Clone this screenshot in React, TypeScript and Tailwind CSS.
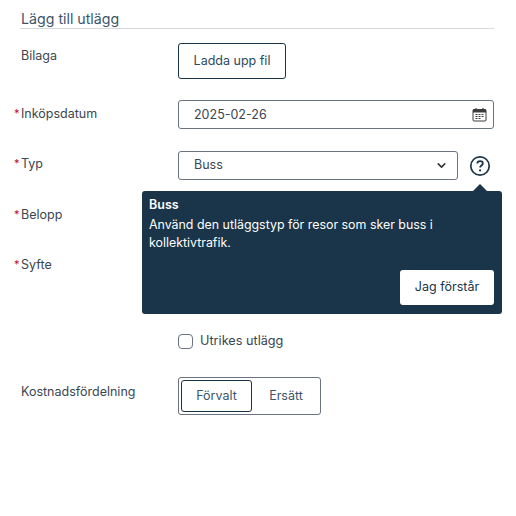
import { ChevronDown } from "lucide-react";

const font = "font-['Inter','Liberation_Sans',sans-serif]";

// Label column, required fields get a red star hanging to the left
function FieldLabel({ text, required, className }: { text: string; required?: boolean; className?: string }) {
  return (
    <div className={`pl-px text-[12.5px] leading-[16px] text-[#3a4650] ${className ?? ""}`}>
      {required && <span className="-ml-[7px] inline-block w-[7px] align-top text-[11px] leading-[14px] text-[#b3123f]">*</span>}
      {text}
    </div>
  );
}

function CalendarIcon() {
  return (
    <svg width="15" height="15" viewBox="0 0 15 15" fill="none">
      <rect x="1" y="2.5" width="13" height="11.5" rx="1" stroke="#3c3c3c" strokeWidth="1" />
      <rect x="1" y="2.5" width="13" height="3" fill="#3c3c3c" />
      <path d="M4 1v3M11 1v3" stroke="#3c3c3c" strokeWidth="1.2" />
      <path d="M3.5 7.5h2M6.5 7.5h2M9.5 7.5h2M3.5 9.5h2M6.5 9.5h2M9.5 9.5h2M3.5 11.5h2M6.5 11.5h2" stroke="#3c3c3c" strokeWidth="1" />
    </svg>
  );
}

function HelpIcon() {
  return (
    <svg width="22" height="22" viewBox="0 0 22 22" fill="none">
      <circle cx="11" cy="11" r="9.2" stroke="#1a3549" strokeWidth="1.7" />
      <path d="M8.3 8.6c0-1.5 1.2-2.5 2.8-2.5s2.7 1 2.7 2.3c0 2-2.7 2.1-2.7 4.1" stroke="#1a3549" strokeWidth="1.8" />
      <circle cx="11.1" cy="15.4" r="1.1" fill="#1a3549" />
    </svg>
  );
}

function Popover() {
  return (
    <div className="absolute left-[142px] top-[191px] h-[123px] w-[360px] rounded-[3px] bg-[#1a3549] px-[7px] py-[6px] text-white">
      <div className="absolute -top-[7px] left-[331px] h-0 w-0 border-x-[7px] border-b-[7px] border-x-transparent border-b-[#1a3549]" />
      <div className="text-[12.5px] font-semibold leading-[16px]">Buss</div>
      <p className="mt-[3px] text-[12.4px] leading-[17.5px]">
        Använd den utläggstyp för resor som sker buss i kollektivtrafik.
      </p>
      <div className="absolute bottom-[9px] right-2">
        <button className="h-[35px] w-[94px] rounded-[3px] bg-white text-[12.5px] text-[#1a3549]">Jag förstår</button>
      </div>
    </div>
  );
}

export default function App() {
  return (
    <div className={`relative h-[516px] w-[516px] overflow-hidden bg-white ${font}`}>
      <div className="ml-[20px] w-[474px]">
        <h2 className="h-[29px] border-b border-[#d6d9dc] pl-px pt-[10px] text-[14.2px] leading-[17px] text-[#3b5568]">
          Lägg till utlägg
        </h2>

        <div className="mt-[14px] grid grid-cols-[158px_1fr]">
          <FieldLabel text="Bilaga" className="pt-[5px]" />
          <button className="h-[36px] w-[108px] rounded-[3px] border border-[#1a3549] text-[12.5px] text-[#2a4a60]">
            Ladda upp fil
          </button>
        </div>

        <div className="mt-[21px] grid grid-cols-[158px_1fr]">
          <FieldLabel text="Inköpsdatum" required className="pt-[6px]" />
          <div className="flex h-[29px] items-center justify-between rounded-[3px] border border-[#6b7280] pl-[15px] pr-[6px] text-[12.5px] text-[#3a4650]">
            <span className="pt-px">2025-02-26</span>
            <CalendarIcon />
          </div>
        </div>

        <div className="mt-[22px] grid grid-cols-[158px_1fr]">
          <FieldLabel text="Typ" required className="pt-[5px]" />
          <div className="flex items-center gap-[11px]">
            <div className="flex h-[29px] w-[280px] items-center justify-between rounded-[3px] border border-[#6b7280] pl-[15px] pr-[9px] text-[12.5px] text-[#3a4650]">
              <span>Buss</span>
              <ChevronDown size={13} strokeWidth={2.8} color="#333333" />
            </div>
            <HelpIcon />
          </div>
        </div>

        <div className="mt-[21px] grid h-[29px] grid-cols-[158px_1fr]">
          <FieldLabel text="Belopp" required className="pt-[6px]" />
        </div>

        <div className="mt-[21px] grid h-[60px] grid-cols-[158px_1fr]">
          <FieldLabel text="Syfte" required className="pt-[6px]" />
        </div>

        <div className="mt-[22px] grid grid-cols-[158px_1fr]">
          <div />
          <label className="flex h-[16px] items-center gap-[7px] text-[12.7px] text-[#3a4650]">
            <span className="h-[15px] w-[15px] rounded-[4px] border border-[#6b7280]" />
            Utrikes utlägg
          </label>
        </div>

        <div className="mt-[28px] grid grid-cols-[158px_1fr]">
          <FieldLabel text="Kostnadsfördelning" className="pt-[7px]" />
          <div className="flex h-[38px] w-[143px] items-center rounded-[3px] border border-[#6b7280] pl-[2px] text-[12.5px] text-[#3b5568]">
            <button className="h-[32px] w-[71px] rounded-[3px] border border-[#1a3549]">Förvalt</button>
            <button className="h-[32px] w-[68px]">Ersätt</button>
          </div>
        </div>
      </div>

      <Popover />
    </div>
  );
}
